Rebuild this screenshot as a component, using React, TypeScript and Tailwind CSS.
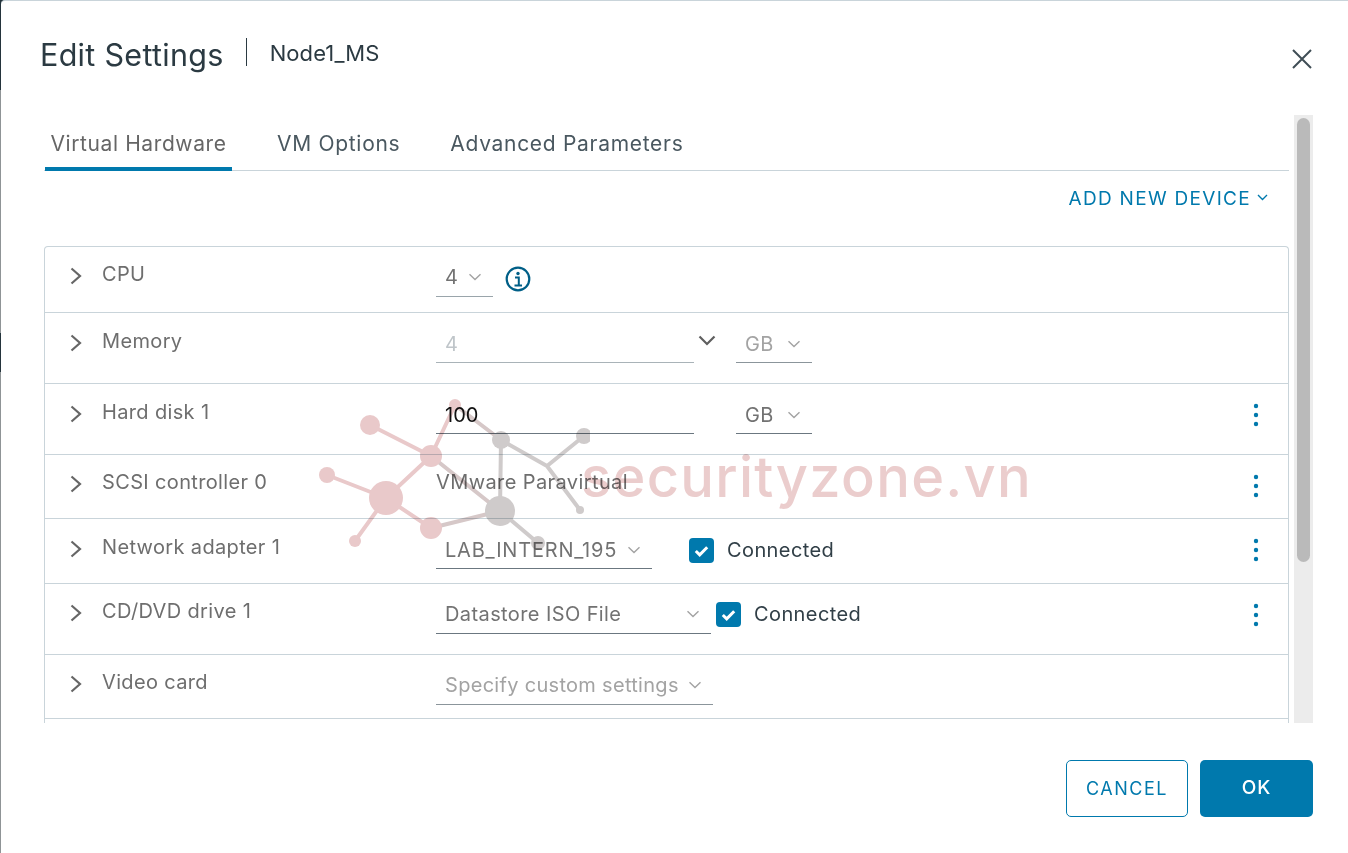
import type { ReactNode } from 'react'

const FONT = "font-['Inter','Liberation_Sans',sans-serif]"

function Chevron({ className = 'text-[#a3a3a3]' }: { className?: string }) {
  return (
    <svg width="14" height="8" viewBox="0 0 14 8" fill="none" className={className}>
      <path d="M1.5 1.2 7 6.500l5.500-5.300" stroke="currentColor" strokeWidth="1.400" />
    </svg>
  )
}

function ExpandIcon() {
  return (
    <svg width="12" height="18" viewBox="0 0 12 18" fill="none" className="text-[#666]">
      <path d="M1.500 1.500 10 9l-8.500 7.500" stroke="currentColor" strokeWidth="2.200" />
    </svg>
  )
}

function Dots() {
  return (
    <svg width="6" height="24" viewBox="0 0 6 24" className="fill-[#0079ad]">
      <circle cx="3" cy="3" r="2.200" />
      <circle cx="3" cy="12" r="2.200" />
      <circle cx="3" cy="21" r="2.200" />
    </svg>
  )
}

function Select({
  value,
  width,
  textClass = 'text-[#727272]',
  lineClass = 'border-[#6b7780]',
  trackClass = 'tracking-[0.4px]',
}: {
  value: string
  width: string
  textClass?: string
  lineClass?: string
  trackClass?: string
}) {
  return (
    <div className={`flex h-[34px] items-start justify-between border-b pl-[9px] pr-[11px] ${width} ${lineClass}`}>
      <span className={`text-[20px] leading-[28px] ${trackClass} ${textClass}`}>{value}</span>
      <span className="mt-[10px]">
        <Chevron />
      </span>
    </div>
  )
}

function Check({ label }: { label: string }) {
  return (
    <div className="flex items-center">
      <span className="flex h-[25px] w-[25px] items-center justify-center rounded-[4px] bg-[#0079ad]">
        <svg width="15" height="12" viewBox="0 0 15 12" fill="none">
          <path d="M1.800 6l3.900 3.900L13.200 2.300" stroke="white" strokeWidth="3" />
        </svg>
      </span>
      <span className="-mt-px ml-[13px] text-[20px] leading-[28px] tracking-[0.4px] text-[#313f47]">{label}</span>
    </div>
  )
}

function Row({
  label,
  height,
  labelTop,
  valueTop,
  dotsTop,
  children,
}: {
  label: string
  height: string
  labelTop: string
  valueTop: string
  dotsTop?: string
  children?: ReactNode
}) {
  return (
    <div className={`flex border-b border-[#c9d4da] ${height}`}>
      <div className={`flex w-[391px] shrink-0 items-start pl-[25px] ${labelTop}`}>
        <span className="mt-[6px]">
          <ExpandIcon />
        </span>
        <span className="ml-[20px] text-[20px] leading-[26px] tracking-[0.35px] text-[#6e6e6e]">{label}</span>
      </div>
      <div className={`flex flex-1 items-start ${valueTop}`}>{children}</div>
      {dotsTop && (
        <div className={`mr-[29px] ${dotsTop}`}>
          <Dots />
        </div>
      )}
    </div>
  )
}

function Watermark() {
  const pink = '#e9c9ca'
  const grey = '#cfcbcb'
  return (
    <div className="pointer-events-none absolute left-[309px] top-[389px] flex mix-blend-multiply">
      <svg width="280" height="170" viewBox="310 390 280 170" fill="none">
        <g stroke={pink} strokeWidth="4">
          <path d="M370 425 431 456M327 475 386 498M386 498 431 456M386 498 355 541M386 498 431 528M431 456 455 405" />
        </g>
        <g stroke="#d6c8c8" strokeWidth="4">
          <path d="M431 528 500 511M431 456 500 511M455 405 501 440" />
        </g>
        <g stroke={grey} strokeWidth="4">
          <path d="M501 440 500 511M501 440 547 466M547 466 584 436M547 466 580 510M500 511 538 543" />
        </g>
        <g fill={pink}>
          <circle cx="370" cy="425" r="10" />
          <circle cx="327" cy="475" r="8" />
          <circle cx="386" cy="498" r="17" />
          <circle cx="355" cy="541" r="6" />
          <circle cx="431" cy="456" r="11" />
          <circle cx="431" cy="528" r="11" />
          <circle cx="455" cy="405" r="6" />
        </g>
        <g fill={grey}>
          <circle cx="501" cy="440" r="9" />
          <circle cx="584" cy="436" r="8" />
          <circle cx="500" cy="511" r="15" />
          <circle cx="538" cy="543" r="7" />
          <circle cx="580" cy="510" r="4" />
        </g>
      </svg>
      <span className="-ml-[9px] mt-[55px] text-[56px] font-medium leading-[64px] tracking-[1.300px] text-[#ebcdcd]">
        securityzone.vn
      </span>
    </div>
  )
}

export default function App() {
  return (
    <div
      className={`h-[853px] w-[1348px] overflow-hidden bg-[linear-gradient(#24343c_0,#24343c_90px,#8f9496_90px,#8f9496_333px,#24343c_333px,#24343c_372px,#8f9496_372px)] pl-px ${FONT}`}
    >
      <div className="relative flex h-full flex-col overflow-hidden rounded-tl-[4px] border-t border-[#c9d4da] bg-white">
        <header className="relative flex h-[114px] shrink-0 items-start pl-[39px]">
          <h1 className="mt-[34px] text-[30.5px] leading-[40px] tracking-[0.3px] text-[#2b3a42]">Edit Settings</h1>
          <div className="ml-[22px] mt-[37px] h-[28px] w-px bg-[#2b3a42]" />
          <span className="ml-[23px] mt-[37px] text-[22px] leading-[30px] tracking-[0.1px] text-[#2b3a42]">Node1_MS</span>
          <button className="absolute right-[36px] top-[48px]">
            <svg width="20" height="20" viewBox="0 0 20 20" fill="none">
              <path d="M1 1l18 18M19 1 1 19" stroke="#3f4d55" strokeWidth="2" />
            </svg>
          </button>
        </header>

        <div className="flex h-[608px] shrink-0 overflow-hidden">
          <div className="ml-[43px] w-[1245px] shrink-0">
            <div className="flex h-[56px] border-b border-[#c9d4da] text-[21px] tracking-[0.7px]">
              <div className="ml-px flex h-[56px] w-[187px] items-start justify-center border-b-[4px] border-[#0079ad] pt-[14px] leading-[30px] tracking-[0.6px] text-[#666]">
                Virtual Hardware
              </div>
              <div className="ml-[45px] pt-[14px] leading-[30px] text-[#4a5860]">VM Options</div>
              <div className="ml-[50px] pt-[14px] leading-[30px] text-[#4a5860]">Advanced Parameters</div>
            </div>

            <div className="flex h-[75px] items-start justify-end pr-[21px] pt-[14px] text-[#0079ad]">
              <span className="text-[19px] leading-[28px] tracking-[1.300px]">ADD NEW DEVICE</span>
              <span className="ml-[6px] mt-[9px]">
                <svg width="11" height="7" viewBox="0 0 11 7" fill="none">
                  <path d="M1 1l4.500 4.500L10 1" stroke="currentColor" strokeWidth="1.400" />
                </svg>
              </span>
            </div>

            <div className="rounded-t-[4px] border-x border-t border-[#c9d4da]">
              <Row label="CPU" height="h-[66px]" labelTop="pt-[14px]" valueTop="pt-[16px]">
                <Select value="4" width="w-[57px]" lineClass="border-[#9aa5ab]" />
                <span className="ml-[12px] mt-[3px]">
                  <svg width="26" height="26" viewBox="0 0 26 26" fill="none">
                    <circle cx="13" cy="13" r="11.300" stroke="#005f87" strokeWidth="2.200" />
                    <circle cx="13" cy="7.500" r="1.700" fill="#005f87" />
                    <path d="M10 11.500h3.800V19M9.500 19.500h7.500" stroke="#005f87" strokeWidth="2" />
                  </svg>
                </span>
              </Row>
              <Row label="Memory" height="h-[71px]" labelTop="pt-[15px]" valueTop="pt-[17px]">
                <div className="h-[33px] w-[258px] border-b border-[#a9b3b8] pl-[9px] text-[20px] leading-[28px] text-[#bfc5c9]">
                  4
                </div>
                <span className="ml-[4px] mt-[5px] w-[38px]">
                  <svg width="18" height="11" viewBox="0 0 18 11" fill="none">
                    <path d="M1.500 1.500 9 9l7.500-7.500" stroke="#5f5f5f" strokeWidth="2.200" />
                  </svg>
                </span>
                <Select value="GB" width="w-[76px] !h-[33px]" textClass="text-[#a3a3a3]" lineClass="border-[#8b959b]" />
              </Row>
              <Row label="Hard disk 1" height="h-[71px]" labelTop="pt-[15px]" valueTop="pt-[17px]" dotsTop="pt-[19px]">
                <div className="h-[33px] w-[258px] border-b border-[#6b7780] pl-[9px] text-[20px] leading-[28px] text-[#111]">
                  100
                </div>
                <span className="w-[42px]" />
                <Select value="GB" width="w-[76px] !h-[33px]" />
              </Row>
              <Row label="SCSI controller 0" height="h-[64px]" labelTop="pt-[14px]" valueTop="pt-[14px]" dotsTop="pt-[19px]">
                <span className="text-[20px] leading-[26px] tracking-[0.4px] text-[#6e6e6e]">VMware Paravirtual</span>
              </Row>
              <Row label="Network adapter 1" height="h-[65px]" labelTop="pt-[15px]" valueTop="pt-[17px]" dotsTop="pt-[19px]">
                <Select value="LAB_INTERN_195" width="w-[216px] !h-[33px]" trackClass="tracking-[0.8px]" />
                <span className="ml-[37px] mt-px">
                  <Check label="Connected" />
                </span>
              </Row>
              <Row label="CD/DVD drive 1" height="h-[71px]" labelTop="pt-[14px]" valueTop="pt-[16px]" dotsTop="pt-[19px]">
                <Select value="Datastore ISO File" width="w-[275px]" />
                <span className="ml-[5px] mt-px">
                  <Check label="Connected" />
                </span>
              </Row>
              <Row label="Video card" height="h-[64px]" labelTop="pt-[14px]" valueTop="pt-[16px]">
                <Select value="Specify custom settings" width="w-[277px]" textClass="text-[#a3a3a3]" lineClass="border-[#8b959b]" trackClass="tracking-[0.3px]" />
              </Row>
              <div className="h-[40px]" />
            </div>
          </div>

          <div className="ml-[5px] h-full w-[19px] shrink-0 bg-[#ececec] px-[3px] pt-[3px]">
            <div className="h-[444px] rounded-[7px] bg-[#bababa]" />
          </div>
        </div>

        <footer className="flex flex-1 items-start justify-end gap-[12px] pr-[35px] pt-[37px]">
          <button className="h-[57px] w-[122px] rounded-[5px] border border-[#0079ad] text-[18px] tracking-[1.500px] text-[#0079ad]">
            CANCEL
          </button>
          <button className="h-[57px] w-[113px] rounded-[5px] bg-[#0079ad] text-[19px] font-medium tracking-[1px] text-white">
            OK
          </button>
        </footer>

        <Watermark />
      </div>
    </div>
  )
}
